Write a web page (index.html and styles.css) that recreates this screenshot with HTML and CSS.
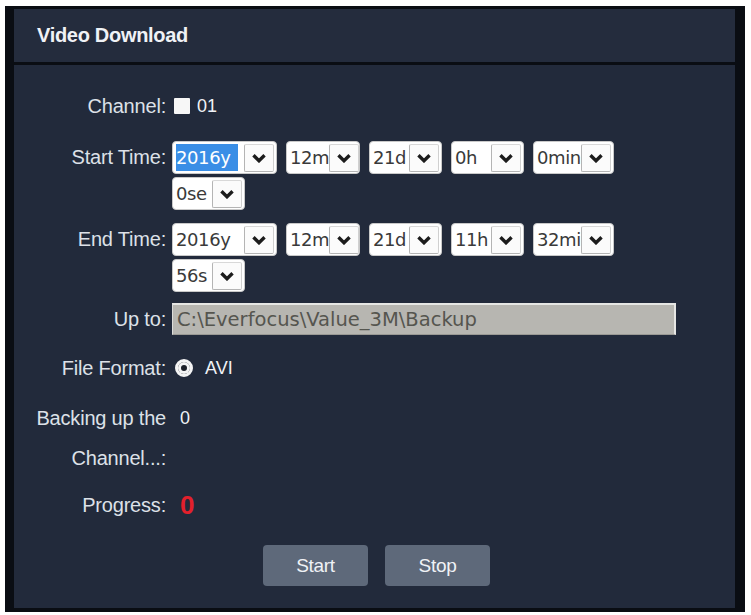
FILE: index.html
```html
<!DOCTYPE html>
<html lang="en">
<head>
  <meta charset="UTF-8">
  <title>Video Download</title>
  <link rel="stylesheet" href="styles.css">
</head>
<body>

  <div class="frame">
    <div class="panel-head">Video Download</div>

    <div class="panel-body">
      <div class="row row-channel">
        <div class="label">Channel:</div>
        <div class="value">
          <span class="check"></span>
          <span class="plain">01</span>
        </div>
      </div>

      <div class="row row-start">
        <div class="label tall">Start Time:</div>
        <div class="value selects">
          <div class="sel w-year"><span class="txt"><span class="picked">2016y</span></span><span class="drop"><svg viewBox="0 0 14 9"><polyline points="2,2 7,7 12,2"/></svg></span></div>
          <div class="sel w-mon"><span class="txt">12m</span><span class="drop"><svg viewBox="0 0 14 9"><polyline points="2,2 7,7 12,2"/></svg></span></div>
          <div class="sel w-day"><span class="txt">21d</span><span class="drop"><svg viewBox="0 0 14 9"><polyline points="2,2 7,7 12,2"/></svg></span></div>
          <div class="sel w-hour"><span class="txt">0h</span><span class="drop"><svg viewBox="0 0 14 9"><polyline points="2,2 7,7 12,2"/></svg></span></div>
          <div class="sel w-min"><span class="txt">0min</span><span class="drop"><svg viewBox="0 0 14 9"><polyline points="2,2 7,7 12,2"/></svg></span></div>
          <div class="sel w-sec"><span class="txt">0se</span><span class="drop"><svg viewBox="0 0 14 9"><polyline points="2,2 7,7 12,2"/></svg></span></div>
        </div>
      </div>

      <div class="row row-end">
        <div class="label tall">End Time:</div>
        <div class="value selects">
          <div class="sel w-year"><span class="txt">2016y</span><span class="drop"><svg viewBox="0 0 14 9"><polyline points="2,2 7,7 12,2"/></svg></span></div>
          <div class="sel w-mon"><span class="txt">12m</span><span class="drop"><svg viewBox="0 0 14 9"><polyline points="2,2 7,7 12,2"/></svg></span></div>
          <div class="sel w-day"><span class="txt">21d</span><span class="drop"><svg viewBox="0 0 14 9"><polyline points="2,2 7,7 12,2"/></svg></span></div>
          <div class="sel w-hour"><span class="txt">11h</span><span class="drop"><svg viewBox="0 0 14 9"><polyline points="2,2 7,7 12,2"/></svg></span></div>
          <div class="sel w-min"><span class="txt">32mi</span><span class="drop"><svg viewBox="0 0 14 9"><polyline points="2,2 7,7 12,2"/></svg></span></div>
          <div class="sel w-sec"><span class="txt">56s</span><span class="drop"><svg viewBox="0 0 14 9"><polyline points="2,2 7,7 12,2"/></svg></span></div>
        </div>
      </div>

      <div class="row row-path">
        <div class="label path-label">Up to:</div>
        <div class="value">
          <div class="path">C:\Everfocus\Value_3M\Backup</div>
        </div>
      </div>

      <div class="row row-format">
        <div class="label">File Format:</div>
        <div class="value">
          <span class="radio"></span>
          <span class="plain">AVI</span>
        </div>
      </div>

      <div class="row row-backup">
        <div class="label two-line">Backing up the Channel...:</div>
        <div class="value">
          <span class="plain two-line">0</span>
        </div>
      </div>

      <div class="row row-progress">
        <div class="label">Progress:</div>
        <div class="value">
          <span class="progress">0</span>
        </div>
      </div>

      <div class="actions">
        <button class="btn">Start</button>
        <button class="btn">Stop</button>
      </div>
    </div>
  </div>

</body>
</html>
```

FILE: styles.css
```css
/* frame / panel colours */
:root {
  --frame:  #0a0d13;
  --head:   #242c3d;
  --panel:  #222a3b;
  --text:   #dde1e8;
  --bright: #f0f2f6;
  --btn:    #5e697a;
  --red:    #e3202c;
}

body {
  margin: 0;
  background: #ffffff;
  font-family: "Liberation Sans", Arial, sans-serif;
}

.frame {
  width: 721px;
  margin: 6px 0 0 5px;
  background: var(--frame);
  padding: 3px 10px 4px 9px;
  display: flex;
  flex-direction: column;
  gap: 3px;
}

.panel-head {
  background: var(--head);
  height: 53px;
  line-height: 53px;
  padding-left: 23px;
  color: var(--bright);
  font-weight: bold;
  font-size: 20px;
  letter-spacing: -0.3px;
}

.panel-body {
  background: var(--panel);
  height: 514px;
  padding-top: 29px;
  color: var(--text);
  font-size: 20px;
}

.row {
  display: flex;
  align-items: flex-start;
}

.label {
  width: 152px;
  flex: none;
  text-align: right;
  line-height: 24px;
  letter-spacing: -0.2px;
}
.label.tall { line-height: 33px; }
.label.path-label { line-height: 32px; }
.label.two-line { line-height: 40px; }

.value {
  margin-left: 6px;
  display: flex;
  align-items: center;
  min-height: 24px;
}

.plain {
  color: var(--bright);
  line-height: 24px;
  font-size: 18px;
}
.plain.two-line { line-height: 40px; margin-left: 8px; }

.row-start { margin-top: 23px; }
.row-end { margin-top: 13px; }
.row-path { margin-top: 11px; }
.row-format { margin-top: 21px; }
.row-backup { margin-top: 18px; }
.row-progress { margin-top: 15px; }

/* checkbox + radio */
.check {
  width: 16px;
  height: 16px;
  background: #f7f7f7;
  border-radius: 1px;
  margin: 0 7px 0 2px;
}

.radio {
  width: 12px;
  height: 12px;
  border: 3px solid #f4f4f4;
  border-radius: 50%;
  background: #1b1f28;
  box-shadow: inset 0 0 0 3px #f4f4f4;
  margin: 0 12px 0 3px;
}

/* fake select boxes */
.selects {
  width: 460px;
  flex-wrap: wrap;
  column-gap: 9px;
  row-gap: 3px;
}

.sel {
  height: 33px;
  box-sizing: border-box;
  background: #ffffff;
  border: 1px solid #c9c9c9;
  border-radius: 4px;
  display: flex;
  align-items: center;
  padding: 0 2px 0 3px;
  font-family: "DejaVu Sans", Verdana, sans-serif;
  font-size: 18px;
  letter-spacing: -0.4px;
  color: #3a3a3a;
}
.w-year { width: 105px; }
.w-mon  { width: 74px; }
.w-day  { width: 73px; }
.w-hour { width: 73px; }
.w-min  { width: 81px; }
.w-sec  { width: 73px; }

.sel .txt {
  flex: 1;
  white-space: nowrap;
  line-height: 27px;
}
.sel .picked {
  display: inline-block;
  background: #3a8ee6;
  color: #ffffff;
  padding-right: 8px;
}

.drop {
  flex: none;
  width: 30px;
  height: 28px;
  box-sizing: border-box;
  border: 1px solid #b4b4b4;
  border-right-color: #d0d0d0;
  border-top-color: #d8d8d8;
  border-radius: 2px;
  display: flex;
  align-items: center;
  justify-content: center;
  background: #fbfbfb;
}
.drop svg {
  width: 16px;
  height: 10px;
  fill: none;
  stroke: #1c1c1c;
  stroke-width: 3;
}

/* path field */
.path {
  width: 504px;
  height: 32px;
  box-sizing: border-box;
  background: #b7b6b1;
  border-top: 2px solid #e6e6e4;
  border-left: 1px solid #dcdcda;
  border-right: 2px solid #e6e6e4;
  border-bottom: 1px solid #9a9994;
  padding-left: 4px;
  line-height: 29px;
  font-family: "DejaVu Sans", Verdana, sans-serif;
  font-size: 19.5px;
  color: #55554f;
  white-space: nowrap;
}

.progress {
  color: var(--red);
  font-weight: bold;
  font-size: 26px;
  line-height: 24px;
  margin-left: 8px;
}

/* buttons */
.actions {
  margin-top: 28px;
  display: flex;
  justify-content: center;
  gap: 17px;
  padding-left: 4px;
}

.btn {
  width: 105px;
  height: 41px;
  background: var(--btn);
  color: var(--bright);
  border: none;
  border-radius: 4px;
  font-family: "Liberation Sans", Arial, sans-serif;
  font-size: 19px;
  letter-spacing: -0.3px;
}
```
